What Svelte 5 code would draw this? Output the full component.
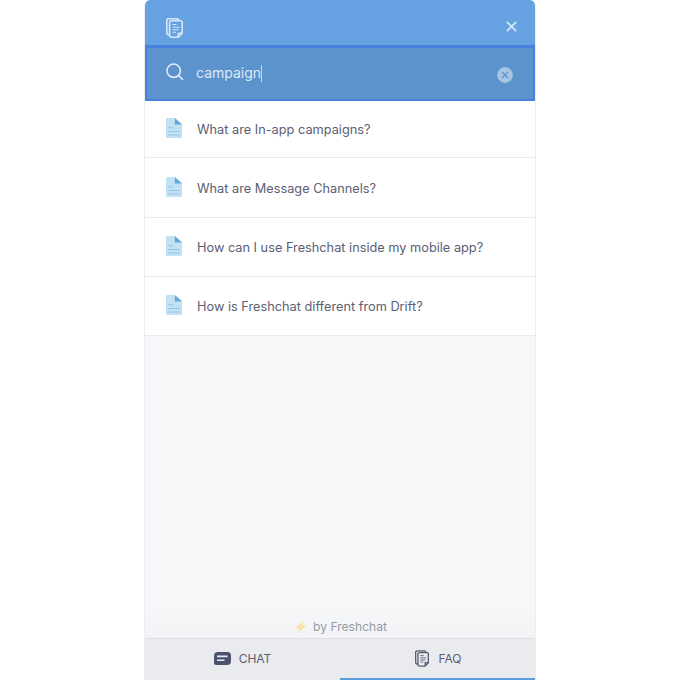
<script>
  const articles = [
    'What are In-app campaigns?',
    'What are Message Channels?',
    'How can I use Freshchat inside my mobile app?',
    'How is Freshchat different from Drift?'
  ];
  let query = $state('campaign');
</script>

{#snippet pages()}
  <svg class="pages" width="17" height="20" viewBox="0 0 17 20" fill="none" stroke="currentColor" stroke-width="1.6" stroke-linejoin="round">
    <path d="M3.6 16.7H2.1L.8 15.4V1.8L1.8.8h10l1.1 1.2" />
    <path d="M4.9 2.7h10l1.3 1.3v11.2l-3.8 4H4.9l-1.3-1.3V4z" />
    <path d="M12.3 19v-3.8h3.8" />
    <path d="M6.5 6.5h4M6.5 9.2h7M6.5 11.8h6.3M6.5 14.2h3.5" stroke-width="1.1" />
  </svg>
{/snippet}

<main class="widget">
  <header>
    {@render pages()}
    <button class="close" aria-label="Close">
      <svg width="11" height="11" viewBox="0 0 11 11" stroke="currentColor" stroke-width="1.7"><path d="M.8.8l9.4 9.4M10.2.8L.8 10.2" /></svg>
    </button>
  </header>

  <div class="search">
    <svg class="lens" width="18" height="18" viewBox="0 0 18 18" fill="none" stroke="currentColor" stroke-width="1.6" stroke-linecap="round">
      <circle cx="7.7" cy="7.7" r="6.7" /><path d="M12.6 12.6l4 3.7" />
    </svg>
    <span class="query">{query}</span><i class="caret"></i>
    <button class="clear" aria-label="Clear search" onclick={() => (query = '')}>
      <svg width="16" height="16" viewBox="0 0 16 16"><circle cx="8" cy="8" r="7.9" fill="#a5c5e3" /><path d="M5 5l6 6M11 5l-6 6" stroke="#5d93cc" stroke-width="1.3" /></svg>
    </button>
  </div>

  <ul>
    {#each articles as title}
      <li>
        <svg width="16" height="20" viewBox="0 0 16 20">
          <path d="M1 0h8l7 6.2V19a1 1 0 0 1-1 1H1a1 1 0 0 1-1-1V1a1 1 0 0 1 1-1z" fill="#c2e2f4" />
          <path d="M8.8 0L16 6.5H8.8z" fill="#63a9d7" />
          <path d="M2.2 9.8h5M2.2 13.5h11.5M2.2 17h11.5" stroke="#8ec7e6" stroke-width="1.1" />
        </svg>
        <span>{title}</span>
      </li>
    {/each}
  </ul>

  <div class="credit">
    <svg width="12" height="14" viewBox="0 0 12 14"><path d="M9 .2L.5 7.8l4.4.8-3.4 5.2 10-8.1-4.5-.8z" fill="#fae2a5" /></svg>
    <span>by Freshchat</span>
  </div>

  <nav>
    <div class="tab">
      <svg width="17" height="13" viewBox="0 0 17 13"><path d="M4 0h9.5Q17 0 17 3.5V9q0 4-4 4H2q-2 0-2-2V4q0-4 4-4z" fill="#4b5270" /><path d="M3 4.4h10.5M3 8.2h7.5" stroke="#e9ebef" stroke-width="1.6" /></svg>
      <span>CHAT</span>
    </div>
    <div class="tab active">
      {@render pages()}
      <span>FAQ</span>
    </div>
  </nav>
</main>

<style>
  :global(body) { background: #fff; }
  .widget {
    box-sizing: border-box;
    width: 392px;
    height: 680px;
    margin-left: 144px;
    border: solid #eceef1;
    border-width: 0 1px;
    border-radius: 6px 6px 0 0;
    overflow: hidden;
    display: flex;
    flex-direction: column;
    background: #f6f7f9;
    font-family: Inter, "Liberation Sans", sans-serif;
    color: #5c6073;
  }
  svg { display: block; flex: none; }
  button { border: 0; padding: 0; background: none; color: inherit; }
  header {
    height: 45px;
    box-sizing: border-box;
    flex: none;
    display: flex;
    justify-content: space-between;
    align-items: flex-start;
    padding: 18px 18px 0 21px;
    background: #66a2e2;
    color: #d5e9f7;
  }
  .close { margin-top: 3px; }
  .search {
    box-sizing: border-box;
    flex: none;
    height: 56px;
    border: 2px solid #4780df;
    border-top-width: 3px;
    background: #5d93cc;
    display: flex;
    align-items: center;
    padding: 0 20px 0 19px;
    color: #dceaf6;
    font-size: 14px;
  }
  .lens { margin-top: -4px; }
  .query { margin: -2px 0 0 12px; }
  .caret { width: 1px; height: 17px; margin-top: -1px; background: #c6d6dd; }
  .clear { margin: 2px 0 0 auto; }
  ul { list-style: none; margin: 0; padding: 0; background: #fff; }
  li {
    box-sizing: border-box;
    height: 59px;
    border-bottom: 1px solid #e9ebee;
    display: flex;
    align-items: center;
    padding-left: 21px;
    font-size: 12.75px;
  }
  li:first-child { height: 57px; }
  li:nth-child(2) { height: 60px; padding-top: 1px; }
  li svg { margin-top: -2px; }
  li span { margin-left: 15px; }
  .credit {
    margin-top: auto;
    height: 26px;
    box-sizing: border-box;
    display: flex;
    justify-content: center;
    align-items: center;
    gap: 6px;
    padding: 3px 0 0 2px;
    font-size: 12.1px;
    color: #969ba5;
    background: linear-gradient(#f5f6f8, #f3f4f6);
  }
  nav {
    flex: none;
    box-sizing: border-box;
    height: 42px;
    border-top: 1px solid #dfe1e5;
    background: #e9ebef;
    display: flex;
    font-size: 12px;
  }
  .tab {
    box-sizing: border-box;
    width: 195px;
    display: flex;
    justify-content: center;
    align-items: center;
    gap: 8px;
    border-bottom: 2px solid transparent;
  }
  .tab.active { border-color: #5b9fdd; gap: 9px; padding-left: 2px; }
  .tab .pages { width: 14px; height: 17px; }
</style>
